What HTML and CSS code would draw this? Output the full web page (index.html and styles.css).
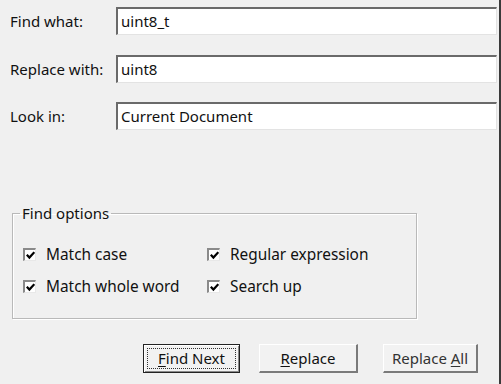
FILE: index.html
```html
<!DOCTYPE html>
<html lang="en">
<head>
    <meta charset="UTF-8">
    <meta name="viewport" content="width=device-width, initial-scale=1.0">
    <title>Find and Replace</title>
    <link rel="stylesheet" href="styles.css">
</head>
<body>
    <div class="dialog">
        <div class="field">
            <label class="field-label">Find what:</label>
            <div class="textbox">uint8_t</div>
        </div>
        <div class="field">
            <label class="field-label">Replace with:</label>
            <div class="textbox">uint8</div>
        </div>
        <div class="field">
            <label class="field-label">Look in:</label>
            <div class="textbox">Current Document</div>
        </div>

        <fieldset class="group">
            <legend>Find options</legend>
            <div class="options">
                <div class="option"><span class="check"><svg width="9" height="9" viewBox="0 0 9 9"><path d="M0.8 3.8 L3.4 6.6 L8.3 1.2" fill="none" stroke="#000" stroke-width="2.2"/></svg></span>Match case</div>
                <div class="option"><span class="check"><svg width="9" height="9" viewBox="0 0 9 9"><path d="M0.8 3.8 L3.4 6.6 L8.3 1.2" fill="none" stroke="#000" stroke-width="2.2"/></svg></span>Regular expression</div>
                <div class="option"><span class="check"><svg width="9" height="9" viewBox="0 0 9 9"><path d="M0.8 3.8 L3.4 6.6 L8.3 1.2" fill="none" stroke="#000" stroke-width="2.2"/></svg></span>Match whole word</div>
                <div class="option"><span class="check"><svg width="9" height="9" viewBox="0 0 9 9"><path d="M0.8 3.8 L3.4 6.6 L8.3 1.2" fill="none" stroke="#000" stroke-width="2.2"/></svg></span>Search up</div>
            </div>
        </fieldset>

        <div class="buttons">
            <button class="btn btn-default"><span class="focus"><u>F</u>ind Next</span></button>
            <button class="btn btn-replace"><u>R</u>eplace</button>
            <button class="btn btn-all">Replace <u>A</u>ll</button>
        </div>
    </div>
</body>
</html>
```

FILE: styles.css
```css
html, body { margin: 0; padding: 0; background: #f0f0f0; }
body { font-family: "Noto Sans", "Open Sans", sans-serif; font-size: 15px; color: #111; }

.dialog {
    width: 499px;
    height: 384px;
    border-right: 2px solid #3a3a3a;
    padding-top: 7px;
    box-sizing: content-box;
    overflow: hidden;
}

.field { display: flex; align-items: center; height: 28px; margin-bottom: 19.5px; padding-left: 10px; }
.field-label { width: 106px; }
.textbox {
    width: 381px;
    height: 28px;
    box-sizing: border-box;
    background: #fff;
    border-top: 2px solid #6a6a6a;
    border-left: 2px solid #6a6a6a;
    border-right: 1px solid #e3e3e3;
    border-bottom: 1px solid #e3e3e3;
    padding-left: 3px;
    line-height: 24px;
}

.group {
    margin: 75px 0 0 12px;
    width: 405px;
    height: 114px;
    box-sizing: border-box;
    border: 1px solid #b9b9b9;
    box-shadow: inset 1px 1px 0 #fff, 1px 1px 0 #fff;
    padding: 23px 0 0 10px;
}
.group legend { padding: 0 2px; margin-left: -3px; line-height: 16px; }

.options { display: grid; grid-template-columns: 184px auto; row-gap: 11px; margin-top: 0; font-size: 15.4px; }
.option { display: flex; align-items: center; height: 21px; }
.check {
    width: 13px;
    height: 13px;
    box-sizing: border-box;
    background: #fff;
    border-top: 2px solid #8a8a8a;
    border-left: 2px solid #8a8a8a;
    border-right: 1px solid #e8e8e8;
    border-bottom: 1px solid #e8e8e8;
    margin-right: 10px;
    display: flex;
    align-items: center;
    justify-content: center;
}

.buttons { display: flex; margin: 25px 0 0 143px; }
.btn {
    font-family: inherit;
    font-size: 15px;
    color: #111;
    height: 29px;
    padding: 0;
    background: #f2f2f2;
    border-top: 1px solid #fff;
    border-left: 1px solid #fff;
    border-right: 2px solid #7a7a7a;
    border-bottom: 2px solid #7a7a7a;
    box-sizing: border-box;
}
.btn u { text-decoration-thickness: 1px; text-underline-offset: 2px; }
.btn-default { width: 97px; border: 1px solid #222; box-shadow: inset 1px 1px 0 #fff, inset -1px -1px 0 #8a8a8a; padding: 3px; }
.btn-default .focus { display: block; height: 100%; box-sizing: border-box; border: 1px dotted #333; line-height: 19px; }
.btn-replace { width: 99px; margin-left: 19px; }
.btn-all { width: 95px; margin-left: 25px; color: #333; }
```
